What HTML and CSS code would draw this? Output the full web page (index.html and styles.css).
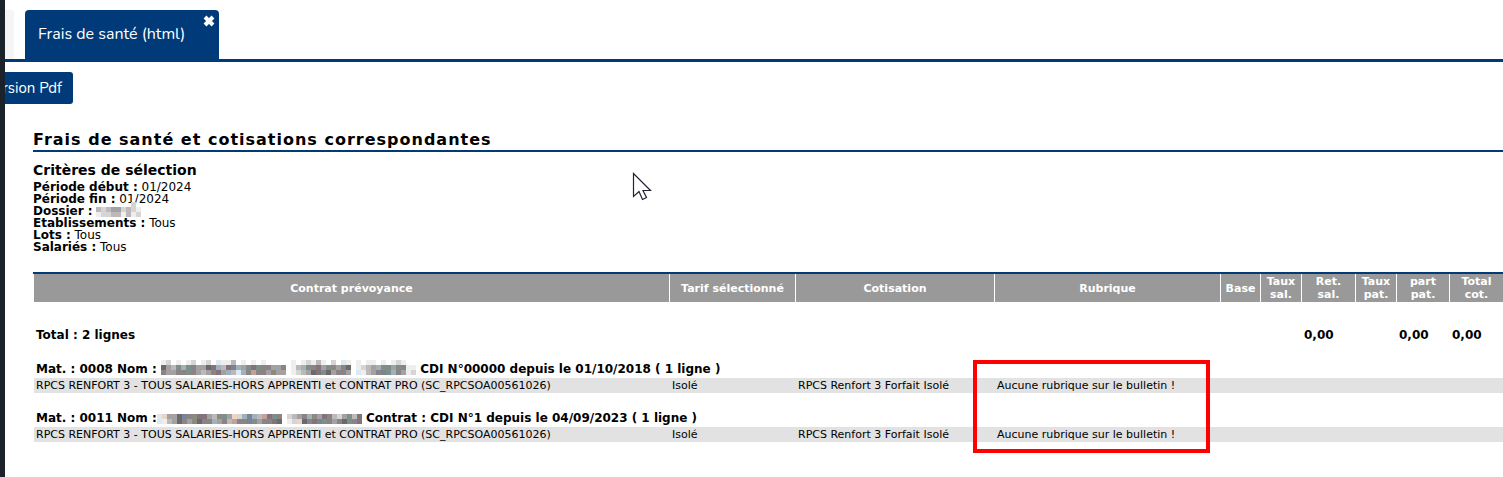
FILE: index.html
```
<!DOCTYPE html>
<html lang="fr">
<head>
  <meta charset="utf-8">
  <title>Frais de santé</title>
  <link rel="stylesheet" href="styles.css">
</head>
<body>
  <div class="sidebar"></div>
  <main class="main">
    <nav class="tabs">
      <div class="tab-old"></div>
      <div class="tab">
        <a href="#rapport">Frais de santé (html)</a>
        <button class="close" aria-label="Fermer">
          <svg width="12" height="12" viewBox="0 0 12 12"><path d="M2 2L10 10M10 2L2 10" stroke="#fff" stroke-width="4"/></svg>
        </button>
      </div>
    </nav>
    <div class="toolbar">
      <button class="btn">Version Pdf</button>
    </div>

    <section class="report" id="rapport">
      <h1>Frais de santé et cotisations correspondantes</h1>
      <h2>Critères de sélection</h2>
      <ul class="criteria">
        <li><b>Période début :</b> 01/2024</li>
        <li><b>Période fin :</b> 01/2024</li>
        <li><b>Dossier :</b> <svg class="mask" id="mask-dossier"></svg></li>
        <li><b>Etablissements :</b> Tous</li>
        <li><b>Lots :</b> Tous</li>
        <li><b>Salariés :</b> Tous</li>
      </ul>

      <div class="table-box">
        <table>
          <colgroup>
            <col>
            <col class="c-tarif">
            <col class="c-cotisation">
            <col class="c-rubrique">
            <col class="c-base">
            <col class="c-taux">
            <col class="c-montant">
            <col class="c-taux">
            <col class="c-part">
            <col class="c-montant">
          </colgroup>
          <thead>
            <tr>
              <th>Contrat prévoyance</th>
              <th>Tarif sélectionné</th>
              <th>Cotisation</th>
              <th>Rubrique</th>
              <th>Base</th>
              <th>Taux sal.</th>
              <th>Ret. sal.</th>
              <th>Taux pat.</th>
              <th>part pat.</th>
              <th>Total cot.</th>
            </tr>
          </thead>
          <tbody>
            <tr class="total">
              <td colspan="6">Total : 2 lignes</td>
              <td>0,00</td>
              <td></td>
              <td>0,00</td>
              <td>0,00</td>
            </tr>
            <tr class="person">
              <td colspan="10">Mat. : 0008 Nom : <svg class="mask" id="mask-0008"></svg> CDI N°00000 depuis le 01/10/2018 ( 1 ligne )</td>
            </tr>
            <tr class="line">
              <td>RPCS RENFORT 3 - TOUS SALARIES-HORS APPRENTI et CONTRAT PRO (SC_RPCSOA00561026)</td>
              <td>Isolé</td>
              <td>RPCS Renfort 3 Forfait Isolé</td>
              <td>Aucune rubrique sur le bulletin !</td>
              <td></td><td></td><td></td><td></td><td></td><td></td>
            </tr>
            <tr class="person">
              <td colspan="10">Mat. : 0011 Nom :<svg class="mask" id="mask-0011"></svg> Contrat : CDI N°1 depuis le 04/09/2023 ( 1 ligne )</td>
            </tr>
            <tr class="line">
              <td>RPCS RENFORT 3 - TOUS SALARIES-HORS APPRENTI et CONTRAT PRO (SC_RPCSOA00561026)</td>
              <td>Isolé</td>
              <td>RPCS Renfort 3 Forfait Isolé</td>
              <td>Aucune rubrique sur le bulletin !</td>
              <td></td><td></td><td></td><td></td><td></td><td></td>
            </tr>
          </tbody>
        </table>
        <div class="highlight"></div>
      </div>
    </section>

    <svg class="cursor" width="20" height="29" viewBox="0 0 20 29">
      <path d="M1.5 1.5V24.5L7 19.5L10.5 27.5L14.5 25.5L11 18.5H18.5Z" fill="#fff" stroke="#223" stroke-width="1.2"/>
    </svg>
  </main>

  <script>
    // one letter per square, "." is left empty
    const shades = {
      a: '#6b6969', b: '#8a8486', c: '#a3a1a2', d: '#bdb9ba', e: '#d5d5d3', f: '#eeeeed',
      g: '#7e8e88', h: '#8b8b7d', p: '#84737b', r: '#bda39b', s: '#ecd3c5', t: '#788597',
      u: '#9fb2bb', v: '#dce9f1'
    };

    function drawMask(id, rows) {
      const svg = document.getElementById(id);
      const size = 5;
      svg.setAttribute('width', rows[0].length * size);
      svg.setAttribute('height', rows.length * size);
      rows.forEach((row, y) => {
        [...row].forEach((key, x) => {
          if (key === '.') return;
          const rect = document.createElementNS('http://www.w3.org/2000/svg', 'rect');
          rect.setAttribute('x', x * size);
          rect.setAttribute('y', y * size);
          rect.setAttribute('width', size);
          rect.setAttribute('height', size);
          rect.setAttribute('fill', shades[key]);
          svg.appendChild(rect);
        });
      });
    }

    drawMask('mask-dossier', [
      '.......e.',
      'dedccedef',
      'feeddfdfe'
    ]);
    drawMask('mask-0008', [
      'fe.f.fe.fe.vffd.f.f.f.....f.fefdf.e.vf.f.ff.f.fef..',
      'acdgugbccapudptucgpgbbccb.fdugbpcghcba.fedcuhgcgbff',
      'bccbbgbcdcbpcudvubrbbchcc.fedcapgacbbc.vfdcbtgubcfe'
    ]);
    drawMask('mask-0011', [
      'vsccatbhppcdhgcseutudrpgb.edcbuhcpbdecgdp',
      'vfdcabchabbucbdrbbtgcbbpa.fesabptgbcbagbp'
    ]);
  </script>
</body>
</html>
```
FILE: styles.css
```
* {
  box-sizing: border-box;
}

body {
  display: flex;
  min-height: 100vh;
  margin: 0;
  background: #fff;
  color: #000;
  font-family: Verdana, "DejaVu Sans", sans-serif;
  font-size: 11px;
}

.sidebar {
  flex: 0 0 5px;
  background: #1b222a;
}

.main {
  position: relative;
  flex: 1;
  min-width: 0;
  overflow: hidden;
}

.tabs {
  display: flex;
  gap: 11px;
  padding-top: 10px;
  border-bottom: 3px solid #003a78;
}

.tab-old {
  width: 9px;
  background: #f5f5f5;
  border-radius: 0 3px 0 0;
}

.tab {
  display: flex;
  align-items: flex-start;
  justify-content: space-between;
  width: 194px;
  height: 49px;
  padding: 5px 4px 0 13px;
  background: #003a78;
  border-radius: 4px 4px 0 0;
}

.tab a {
  padding-top: 7px;
  color: #fff;
  font: 16px/24px Nunito, "Noto Sans", sans-serif;
  text-decoration: none;
  white-space: nowrap;
}

.close {
  display: flex;
  padding: 0;
  border: 0;
  background: none;
  cursor: pointer;
}

.toolbar {
  padding-top: 10px;
}

.btn {
  height: 32px;
  margin-left: -31px;
  padding: 0 11px;
  border: 0;
  border-radius: 3px;
  background: #003a78;
  color: #fff;
  font: 15px/32px Nunito, "Noto Sans", sans-serif;
}

.report {
  padding: 27px 0 0 28px;
}

h1 {
  margin: 0;
  padding-bottom: 1px;
  border-bottom: 2px solid #003a78;
  font-size: 16px;
  line-height: 18px;
  letter-spacing: 1px;
}

h2 {
  margin: 9px 0 2px;
  font-size: 14px;
  line-height: 18px;
}

.criteria {
  margin: 0 0 19px;
  padding: 0;
  list-style: none;
  font-size: 12px;
  line-height: 12px;
}

.criteria li {
  height: 12px;
}

.mask {
  margin-top: -5px;
  vertical-align: -2px;
}

.table-box {
  position: relative;
  border-top: 2px solid #003a78;
}

table {
  width: 100%;
  table-layout: fixed;
  border-collapse: separate;
  border-spacing: 0;
}

.c-tarif { width: 126px; }
.c-cotisation { width: 199px; }
.c-rubrique { width: 226px; }
.c-base { width: 40px; }
.c-taux { width: 41px; }
.c-montant { width: 54px; }
.c-part { width: 53px; }

th {
  height: 28px;
  padding: 1px 2px;
  border-left: 1px solid #fff;
  background: #999;
  color: #fff;
  font-size: 11px;
  line-height: 13px;
}

td {
  padding: 0 3px;
  white-space: nowrap;
}

td:first-child {
  padding-left: 2px;
  border-left: 1px solid #fff;
}

.total td,
.person td {
  height: 34px;
  padding-bottom: 1px;
  font-size: 12px;
  font-weight: bold;
  line-height: 16px;
  vertical-align: bottom;
}

.total td {
  height: 42px;
}

.line td {
  height: 15px;
  padding-top: 1px;
  background: #e2e2e2;
  line-height: 14px;
}

/* red frame over the "Rubrique" column */
.highlight {
  position: absolute;
  top: 86px;
  right: 293px;
  width: 237px;
  height: 93px;
  border: 4px solid #f00;
}

.cursor {
  position: absolute;
  top: 172px;
  left: 627px;
}
```
